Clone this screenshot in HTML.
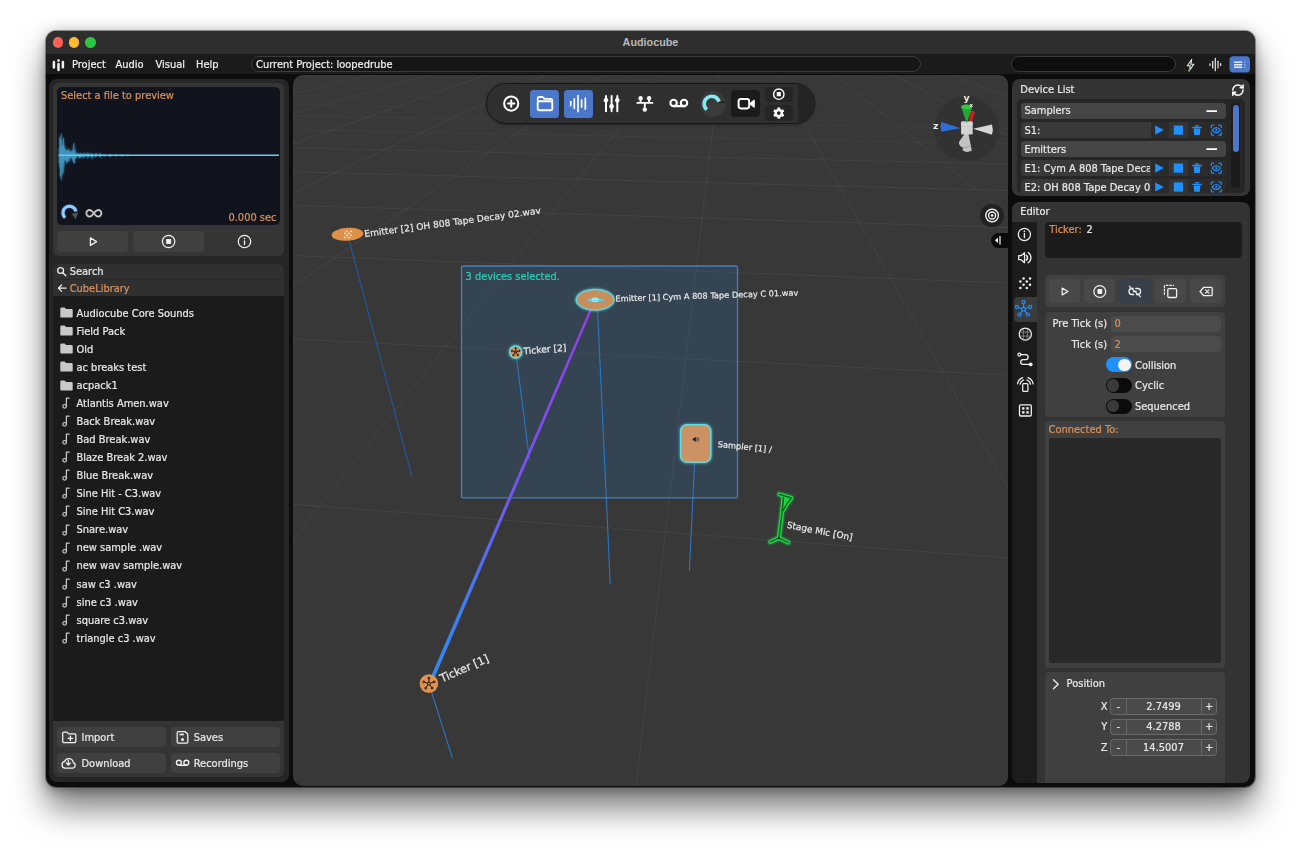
<!DOCTYPE html>
<html lang="en">
<head>
<meta charset="utf-8">
<title>Audiocube</title>
<style>
*{box-sizing:border-box;margin:0;padding:0}
html,body{width:1300px;height:847px;overflow:hidden;background:#fff}
body{-webkit-text-stroke:.22px currentColor;font-family:"DejaVu Sans","Liberation Sans",sans-serif;font-size:9.9px;color:#e8e8e8;position:relative}
.abs{position:absolute}
#win{position:absolute;left:46px;top:31px;width:1209px;height:756px;background:#0c0c0c;border-radius:10px;overflow:hidden;opacity:.999;
  box-shadow:0 0 0 1px rgba(0,0,0,.35)}
#shadow{position:absolute;left:46px;top:31px;width:1209px;height:756px;border-radius:10px;
  box-shadow:0 21px 33px rgba(0,0,0,.52),0 3px 9px rgba(0,0,0,.22),0 0 16px rgba(0,0,0,.16)}
#titlebar{position:absolute;left:0;top:0;width:100%;height:23px;background:#2e2e2e;text-align:center;line-height:23.6px;font-weight:bold;font-family:'Liberation Sans',sans-serif;font-size:10.8px;color:#b9b9b9;-webkit-text-stroke:0}
.tl{position:absolute;top:6.1px;width:10.6px;height:10.6px;border-radius:50%}
#menubar{position:absolute;left:0;top:23px;width:100%;height:19.6px;background:#1b1b1b}
.menu{position:absolute;top:.2px;line-height:21px;color:#f0f0f0}
.panel{position:absolute;background:#262626;border-radius:8px}
.sub{position:absolute;background:#353535;border-radius:6px}
.btn{position:absolute;background:#404040;border-radius:4px}
svg{position:absolute;overflow:visible}
svg text{-webkit-text-stroke:0}
.t{position:absolute;white-space:nowrap;line-height:12px}
.or{color:#d8925c}
#editor .t,#devlist .t{margin-top:.9px}
</style>
</head>
<body>
<div id="shadow"></div>
<div id="win">
  <div id="titlebar">Audiocube
    <div class="tl" style="left:6.5px;background:#fe5f57"></div>
    <div class="tl" style="left:22.5px;background:#febc2e"></div>
    <div class="tl" style="left:39px;background:#28c840"></div>
  </div>
  <div id="menubar">
    <svg style="left:0;top:0" width="1209" height="21" viewBox="0 0 1209 21" fill="none" stroke-linecap="round" stroke-linejoin="round"><path d="M7.9 7.9V13.4" stroke="#f2f2f2" stroke-width="2.500"/><path d="M16.9 7.9V13.2" stroke="#f2f2f2" stroke-width="2.500"/><path d="M12.5 10.0V16.0" stroke="#f2f2f2" stroke-width="2.500"/><circle cx="12.5" cy="6.6" r="1.350" fill="#f2f2f2"/><path d="M1145.7 5.5L1141.3 11.7h3l-1.200 5.200L1147.9 10.2h-3z" stroke="#f2f2f2" stroke-width="1.050"/><path d="M1143.7 14.5l-.600 2.600" stroke="#2fd24a" stroke-width="1.300"/><path d="M1164.0 9.8v1.6" stroke="#dedede" stroke-width="1.300"/><path d="M1166.7 7.3v6.6" stroke="#dedede" stroke-width="1.300"/><path d="M1169.3 4.5v12.2" stroke="#dedede" stroke-width="1.300"/><path d="M1172.0 7.3v6.6" stroke="#dedede" stroke-width="1.300"/><path d="M1174.6 9.7v1.8" stroke="#dedede" stroke-width="1.300"/><rect x="1183.5" y="2.3" width="20.500" height="16.200" rx="3.800" fill="#4a77c9"/><path d="M1188.0 8.2h8.200" stroke="#e4ecff" stroke-width="1.350" stroke-linecap="butt"/><path d="M1198.2 8.2h1" stroke="#b9cdf5" stroke-width="1.200" stroke-linecap="butt"/><path d="M1188.0 10.7h8.200" stroke="#e4ecff" stroke-width="1.350" stroke-linecap="butt"/><path d="M1198.2 10.7h1" stroke="#b9cdf5" stroke-width="1.200" stroke-linecap="butt"/><path d="M1188.0 13.2h8.200" stroke="#e4ecff" stroke-width="1.350" stroke-linecap="butt"/><path d="M1198.2 13.2h1" stroke="#b9cdf5" stroke-width="1.200" stroke-linecap="butt"/></svg><div class="menu" style="left:26px">Project</div>
    <div class="menu" style="left:69.5px">Audio</div>
    <div class="menu" style="left:109.5px">Visual</div>
    <div class="menu" style="left:150px">Help</div>
    <div class="abs" style="left:205px;top:2px;width:670px;height:16px;border-radius:8px;background:#161616;border:1px solid #3c3c3c"></div>
    <div class="menu" style="left:210px">Current Project: loopedrube</div>
    <div class="abs" style="left:965px;top:2px;width:165px;height:16px;border-radius:8px;background:#0d0d0d;border:1px solid #3a3a3a"></div>
  </div>

  <!-- LEFT PANEL -->
  <div class="panel" id="left" style="left:3px;top:48px;width:240px;height:702.5px">
    <div class="sub" style="left:4px;top:4px;width:231px;height:172.6px"></div>
    <div class="abs" id="prev" style="left:8px;top:8.3px;width:223px;height:137.6px;background:#12141d;border-radius:5px;overflow:hidden">
      <div class="t or" style="left:4px;top:3.2px">Select a file to preview</div>
      <div class="t or" style="right:3.5px;top:124.6px">0.000 sec</div>
      <svg style="left:0;top:0" width="223" height="138" viewBox="0 0 223 138"><defs><filter id="wg" x="-5%" y="-30%" width="110%" height="160%"><feGaussianBlur stdDeviation="1"/></filter></defs>
<path d="M2.15 61.0V76.4M2.70 50.8V80.3M3.25 49.2V88.8M3.80 52.9V90.6M4.35 46.4V93.2M4.90 57.8V82.2M5.45 59.1V88.0M6.00 52.3V75.8M6.55 50.7V85.7M7.10 56.0V80.2M7.65 61.9V73.4M8.20 59.5V73.3M8.75 62.9V74.1M9.30 64.5V75.1M9.85 62.3V76.8M10.40 62.4V74.9M10.95 63.0V74.4M11.50 63.6V72.1M12.05 61.7V74.9M12.60 62.8V73.3M13.15 65.1V71.1M13.70 65.5V70.4M14.25 64.0V71.4M14.80 63.7V71.4M15.35 62.4V73.8M15.90 65.3V72.4M16.45 57.6V75.7M17.00 55.9V76.0M17.55 64.0V76.6M18.10 61.8V72.3M18.65 66.3V71.1M19.20 64.9V71.2M19.75 67.1V69.8M20.30 67.2V69.3M20.85 66.1V69.5M21.40 66.5V69.9M21.95 66.9V70.8M22.50 66.5V71.4M23.05 66.3V71.2M23.60 66.5V70.2M24.15 65.9V70.4M24.70 67.2V70.1M25.25 67.4V69.4M25.80 66.4V69.9M26.35 67.1V71.3M26.90 66.4V70.3M27.45 65.5V70.2M28.00 67.1V69.2M28.55 67.7V69.4M29.10 67.6V69.4M29.65 67.3V69.3M30.20 65.9V69.9M30.75 65.7V71.6M31.30 66.7V69.9M31.85 66.2V70.2M32.40 67.6V68.9M32.95 67.4V69.4M33.50 67.7V69.5M34.05 66.4V69.8M34.60 66.1V69.7M35.15 66.8V72.1M35.70 67.0V70.4M36.25 67.6V69.5M36.80 67.6V68.8M37.35 67.9V69.0M37.90 67.8V68.9M38.45 66.7V70.4M39.00 66.1V69.9M39.55 66.2V69.4M40.10 67.9V68.9M41.75 67.7V68.7M42.30 67.4V69.5M42.85 66.1V69.7M43.40 66.7V70.8M43.95 66.9V69.4M46.15 67.4V69.1M46.70 67.5V69.0M47.25 67.6V70.1M47.80 67.4V69.4M52.20 67.9V69.2M52.75 67.0V69.9M53.30 67.2V70.2M53.85 67.9V69.0M58.80 67.2V69.6M59.35 67.3V69.3M64.85 67.2V69.5M65.40 67.6V69.2M70.90 67.3V69.3" stroke="#2f8fd0" stroke-width="1.2" opacity=".5" filter="url(#wg)" fill="none"/>
<path d="M1.5 68.3H222" stroke="#2f8fd0" stroke-width="3" opacity=".35" filter="url(#wg)"/>
<path d="M2.15 61.0V76.4M2.70 50.8V80.3M3.25 49.2V88.8M3.80 52.9V90.6M4.35 46.4V93.2M4.90 57.8V82.2M5.45 59.1V88.0M6.00 52.3V75.8M6.55 50.7V85.7M7.10 56.0V80.2M7.65 61.9V73.4M8.20 59.5V73.3M8.75 62.9V74.1M9.30 64.5V75.1M9.85 62.3V76.8M10.40 62.4V74.9M10.95 63.0V74.4M11.50 63.6V72.1M12.05 61.7V74.9M12.60 62.8V73.3M13.15 65.1V71.1M13.70 65.5V70.4M14.25 64.0V71.4M14.80 63.7V71.4M15.35 62.4V73.8M15.90 65.3V72.4M16.45 57.6V75.7M17.00 55.9V76.0M17.55 64.0V76.6M18.10 61.8V72.3M18.65 66.3V71.1M19.20 64.9V71.2M19.75 67.1V69.8M20.30 67.2V69.3M20.85 66.1V69.5M21.40 66.5V69.9M21.95 66.9V70.8M22.50 66.5V71.4M23.05 66.3V71.2M23.60 66.5V70.2M24.15 65.9V70.4M24.70 67.2V70.1M25.25 67.4V69.4M25.80 66.4V69.9M26.35 67.1V71.3M26.90 66.4V70.3M27.45 65.5V70.2M28.00 67.1V69.2M28.55 67.7V69.4M29.10 67.6V69.4M29.65 67.3V69.3M30.20 65.9V69.9M30.75 65.7V71.6M31.30 66.7V69.9M31.85 66.2V70.2M32.40 67.6V68.9M32.95 67.4V69.4M33.50 67.7V69.5M34.05 66.4V69.8M34.60 66.1V69.7M35.15 66.8V72.1M35.70 67.0V70.4M36.25 67.6V69.5M36.80 67.6V68.8M37.35 67.9V69.0M37.90 67.8V68.9M38.45 66.7V70.4M39.00 66.1V69.9M39.55 66.2V69.4M40.10 67.9V68.9M41.75 67.7V68.7M42.30 67.4V69.5M42.85 66.1V69.7M43.40 66.7V70.8M43.95 66.9V69.4M46.15 67.4V69.1M46.70 67.5V69.0M47.25 67.6V70.1M47.80 67.4V69.4M52.20 67.9V69.2M52.75 67.0V69.9M53.30 67.2V70.2M53.85 67.9V69.0M58.80 67.2V69.6M59.35 67.3V69.3M64.85 67.2V69.5M65.40 67.6V69.2M70.90 67.3V69.3" stroke="#5fcdf6" stroke-width=".42" opacity=".9" fill="none"/>
<path d="M1.5 68.3H222" stroke="#5fcdf6" stroke-width="1.5"/></svg>
      <svg style="left:2px;top:115px" width="50" height="22" viewBox="0 0 50 22">
<path d="M6.2 15.6A6.5 6.5 0 1 1 16.9 9.6" fill="none" stroke="#3a7fd0" stroke-width="4.6" opacity=".35"/>
<path d="M6.2 15.6A6.5 6.5 0 1 1 16.9 9.6" fill="none" stroke="#93caff" stroke-width="3"/>
<path d="M12.7 11.4L19.2 10.8L16.6 17.2Z" fill="#565656"/>
<path d="M34.85 11.3C33.4 9.2 32.3 8 30.6 8a3.3 3.3 0 0 0 0 6.6c1.7 0 2.8-1.2 4.25-3.3 1.45-2.100 2.550-3.300 4.250-3.300a3.300 3.300 0 0 1 0 6.600c-1.700 0-2.800-1.200-4.250-3.300z" fill="none" stroke="#c6c6c6" stroke-width="1.8"/></svg>
    </div>
    <div class="btn" style="left:8px;top:151.7px;width:71.4px;height:21.2px"></div>
    <div class="btn" style="left:84px;top:151.7px;width:71.4px;height:21.2px"></div>
    <svg style="left:0;top:151.7px" width="240" height="22" viewBox="0 151.7 240 22">
<path d="M41.4 158.6L47.6 162.3L41.4 166.1Z" fill="none" stroke="#f2f2f2" stroke-width="1.25" stroke-linejoin="round"/>
<circle cx="119.6" cy="162.2" r="6.2" fill="none" stroke="#f2f2f2" stroke-width="1.25"/><rect x="117.1" y="159.7" width="5" height="5" rx=".8" fill="#f2f2f2"/>
<circle cx="195.5" cy="162.2" r="6.2" fill="none" stroke="#f2f2f2" stroke-width="1.25"/><path d="M195.5 161.6v3.6" stroke="#f2f2f2" stroke-width="1.3" stroke-linecap="round"/><circle cx="195.5" cy="159.3" r=".8" fill="#f2f2f2"/>
</svg>
    <div class="abs" style="left:4px;top:185px;width:231px;height:31.7px;background:#303030;border-radius:6px 6px 0 0"></div>
    <div class="abs" style="left:4px;top:200.2px;width:231px;height:1px;background:#292929"></div>
    <div class="t" style="left:20.7px;top:186.6px">Search</div>
    <div class="t or" style="left:20.7px;top:204px">CubeLibrary</div>
    <svg style="left:0;top:185px" width="30" height="32" viewBox="0 185 30 32">
<circle cx="11.6" cy="191.5" r="2.9" fill="none" stroke="#f0f0f0" stroke-width="1.3"/><path d="M13.8 193.8l3 3" stroke="#f0f0f0" stroke-width="1.4" stroke-linecap="round"/>
<path d="M17 209.2H9.6M12.6 206l-3.2 3.2 3.2 3.2" fill="none" stroke="#f0f0f0" stroke-width="1.2" stroke-linecap="round" stroke-linejoin="round"/>
</svg>
    <div class="abs" style="left:4px;top:216.6px;width:231px;height:425.1px;background:#1b1b1b"></div>
    <svg style="left:11px;top:228.30px" width="13" height="11" viewBox="0 0 13 11"><path d="M0.3 1.6a1.2 1.2 0 0 1 1.2-1.2h3.1l1.5 1.7h5.4a1.2 1.2 0 0 1 1.2 1.2v6.1a1.2 1.2 0 0 1-1.2 1.2h-10a1.2 1.2 0 0 1-1.2-1.2z" fill="#c9c9c9"/></svg>
<div class="t" style="left:27.5px;top:228.60px">Audiocube Core Sounds</div>
<svg style="left:11px;top:246.36px" width="13" height="11" viewBox="0 0 13 11"><path d="M0.3 1.6a1.2 1.2 0 0 1 1.2-1.2h3.1l1.5 1.7h5.4a1.2 1.2 0 0 1 1.2 1.2v6.1a1.2 1.2 0 0 1-1.2 1.2h-10a1.2 1.2 0 0 1-1.2-1.2z" fill="#c9c9c9"/></svg>
<div class="t" style="left:27.5px;top:246.66px">Field Pack</div>
<svg style="left:11px;top:264.42px" width="13" height="11" viewBox="0 0 13 11"><path d="M0.3 1.6a1.2 1.2 0 0 1 1.2-1.2h3.1l1.5 1.7h5.4a1.2 1.2 0 0 1 1.2 1.2v6.1a1.2 1.2 0 0 1-1.2 1.2h-10a1.2 1.2 0 0 1-1.2-1.2z" fill="#c9c9c9"/></svg>
<div class="t" style="left:27.5px;top:264.72px">Old</div>
<svg style="left:11px;top:282.48px" width="13" height="11" viewBox="0 0 13 11"><path d="M0.3 1.6a1.2 1.2 0 0 1 1.2-1.2h3.1l1.5 1.7h5.4a1.2 1.2 0 0 1 1.2 1.2v6.1a1.2 1.2 0 0 1-1.2 1.2h-10a1.2 1.2 0 0 1-1.2-1.2z" fill="#c9c9c9"/></svg>
<div class="t" style="left:27.5px;top:282.78px">ac breaks test</div>
<svg style="left:11px;top:300.54px" width="13" height="11" viewBox="0 0 13 11"><path d="M0.3 1.6a1.2 1.2 0 0 1 1.2-1.2h3.1l1.5 1.7h5.4a1.2 1.2 0 0 1 1.2 1.2v6.1a1.2 1.2 0 0 1-1.2 1.2h-10a1.2 1.2 0 0 1-1.2-1.2z" fill="#c9c9c9"/></svg>
<div class="t" style="left:27.5px;top:300.84px">acpack1</div>
<svg style="left:12.5px;top:318.10px" width="8" height="12" viewBox="0 0 8 12"><path d="M4.4 9.2V1.2h2.8" fill="none" stroke="#c9c9c9" stroke-width="1.2" stroke-linecap="round" stroke-linejoin="round"/><circle cx="2.6" cy="9.3" r="1.8" fill="none" stroke="#c9c9c9" stroke-width="1.2"/></svg>
<div class="t" style="left:27.5px;top:318.90px">Atlantis Amen.wav</div>
<svg style="left:12.5px;top:336.16px" width="8" height="12" viewBox="0 0 8 12"><path d="M4.4 9.2V1.2h2.8" fill="none" stroke="#c9c9c9" stroke-width="1.2" stroke-linecap="round" stroke-linejoin="round"/><circle cx="2.6" cy="9.3" r="1.8" fill="none" stroke="#c9c9c9" stroke-width="1.2"/></svg>
<div class="t" style="left:27.5px;top:336.96px">Back Break.wav</div>
<svg style="left:12.5px;top:354.22px" width="8" height="12" viewBox="0 0 8 12"><path d="M4.4 9.2V1.2h2.8" fill="none" stroke="#c9c9c9" stroke-width="1.2" stroke-linecap="round" stroke-linejoin="round"/><circle cx="2.6" cy="9.3" r="1.8" fill="none" stroke="#c9c9c9" stroke-width="1.2"/></svg>
<div class="t" style="left:27.5px;top:355.02px">Bad Break.wav</div>
<svg style="left:12.5px;top:372.28px" width="8" height="12" viewBox="0 0 8 12"><path d="M4.4 9.2V1.2h2.8" fill="none" stroke="#c9c9c9" stroke-width="1.2" stroke-linecap="round" stroke-linejoin="round"/><circle cx="2.6" cy="9.3" r="1.8" fill="none" stroke="#c9c9c9" stroke-width="1.2"/></svg>
<div class="t" style="left:27.5px;top:373.08px">Blaze Break 2.wav</div>
<svg style="left:12.5px;top:390.34px" width="8" height="12" viewBox="0 0 8 12"><path d="M4.4 9.2V1.2h2.8" fill="none" stroke="#c9c9c9" stroke-width="1.2" stroke-linecap="round" stroke-linejoin="round"/><circle cx="2.6" cy="9.3" r="1.8" fill="none" stroke="#c9c9c9" stroke-width="1.2"/></svg>
<div class="t" style="left:27.5px;top:391.14px">Blue Break.wav</div>
<svg style="left:12.5px;top:408.40px" width="8" height="12" viewBox="0 0 8 12"><path d="M4.4 9.2V1.2h2.8" fill="none" stroke="#c9c9c9" stroke-width="1.2" stroke-linecap="round" stroke-linejoin="round"/><circle cx="2.6" cy="9.3" r="1.8" fill="none" stroke="#c9c9c9" stroke-width="1.2"/></svg>
<div class="t" style="left:27.5px;top:409.20px">Sine Hit - C3.wav</div>
<svg style="left:12.5px;top:426.46px" width="8" height="12" viewBox="0 0 8 12"><path d="M4.4 9.2V1.2h2.8" fill="none" stroke="#c9c9c9" stroke-width="1.2" stroke-linecap="round" stroke-linejoin="round"/><circle cx="2.6" cy="9.3" r="1.8" fill="none" stroke="#c9c9c9" stroke-width="1.2"/></svg>
<div class="t" style="left:27.5px;top:427.26px">Sine Hit C3.wav</div>
<svg style="left:12.5px;top:444.52px" width="8" height="12" viewBox="0 0 8 12"><path d="M4.4 9.2V1.2h2.8" fill="none" stroke="#c9c9c9" stroke-width="1.2" stroke-linecap="round" stroke-linejoin="round"/><circle cx="2.6" cy="9.3" r="1.8" fill="none" stroke="#c9c9c9" stroke-width="1.2"/></svg>
<div class="t" style="left:27.5px;top:445.32px">Snare.wav</div>
<svg style="left:12.5px;top:462.58px" width="8" height="12" viewBox="0 0 8 12"><path d="M4.4 9.2V1.2h2.8" fill="none" stroke="#c9c9c9" stroke-width="1.2" stroke-linecap="round" stroke-linejoin="round"/><circle cx="2.6" cy="9.3" r="1.8" fill="none" stroke="#c9c9c9" stroke-width="1.2"/></svg>
<div class="t" style="left:27.5px;top:463.38px">new sample .wav</div>
<svg style="left:12.5px;top:480.64px" width="8" height="12" viewBox="0 0 8 12"><path d="M4.4 9.2V1.2h2.8" fill="none" stroke="#c9c9c9" stroke-width="1.2" stroke-linecap="round" stroke-linejoin="round"/><circle cx="2.6" cy="9.3" r="1.8" fill="none" stroke="#c9c9c9" stroke-width="1.2"/></svg>
<div class="t" style="left:27.5px;top:481.44px">new wav sample.wav</div>
<svg style="left:12.5px;top:498.70px" width="8" height="12" viewBox="0 0 8 12"><path d="M4.4 9.2V1.2h2.8" fill="none" stroke="#c9c9c9" stroke-width="1.2" stroke-linecap="round" stroke-linejoin="round"/><circle cx="2.6" cy="9.3" r="1.8" fill="none" stroke="#c9c9c9" stroke-width="1.2"/></svg>
<div class="t" style="left:27.5px;top:499.50px">saw c3 .wav</div>
<svg style="left:12.5px;top:516.76px" width="8" height="12" viewBox="0 0 8 12"><path d="M4.4 9.2V1.2h2.8" fill="none" stroke="#c9c9c9" stroke-width="1.2" stroke-linecap="round" stroke-linejoin="round"/><circle cx="2.6" cy="9.3" r="1.8" fill="none" stroke="#c9c9c9" stroke-width="1.2"/></svg>
<div class="t" style="left:27.5px;top:517.56px">sine c3 .wav</div>
<svg style="left:12.5px;top:534.82px" width="8" height="12" viewBox="0 0 8 12"><path d="M4.4 9.2V1.2h2.8" fill="none" stroke="#c9c9c9" stroke-width="1.2" stroke-linecap="round" stroke-linejoin="round"/><circle cx="2.6" cy="9.3" r="1.8" fill="none" stroke="#c9c9c9" stroke-width="1.2"/></svg>
<div class="t" style="left:27.5px;top:535.62px">square c3.wav</div>
<svg style="left:12.5px;top:552.88px" width="8" height="12" viewBox="0 0 8 12"><path d="M4.4 9.2V1.2h2.8" fill="none" stroke="#c9c9c9" stroke-width="1.2" stroke-linecap="round" stroke-linejoin="round"/><circle cx="2.6" cy="9.3" r="1.8" fill="none" stroke="#c9c9c9" stroke-width="1.2"/></svg>
<div class="t" style="left:27.5px;top:553.68px">triangle c3 .wav</div>
    <div class="abs" style="left:4px;top:641.7px;width:231px;height:56.8px;background:#343434;border-radius:0 0 6px 6px"></div>
    <div class="btn" style="left:7.75px;top:648px;width:109.5px;height:20.3px"></div>
    <div class="btn" style="left:121.5px;top:648px;width:109.5px;height:20.3px"></div>
    <div class="btn" style="left:7.75px;top:674px;width:109.5px;height:20.3px"></div>
    <div class="btn" style="left:121.5px;top:674px;width:109.5px;height:20.3px"></div>
    <div class="t" style="left:32.5px;top:652.7px">Import</div>
    <div class="t" style="left:144.7px;top:652.7px">Saves</div>
    <div class="t" style="left:32.5px;top:678.7px">Download</div>
    <div class="t" style="left:144.7px;top:678.7px">Recordings</div>
    <svg style="left:0;top:640px" width="240" height="62" viewBox="0 640 240 62" fill="none" stroke="#f2f2f2" stroke-width="1.250" stroke-linecap="round" stroke-linejoin="round"><path d="M13.7 654.2a1.100 1.100 0 0 1 1.100-1.100h3.200l1.500 1.700h6.200a1.100 1.100 0 0 1 1.100 1.100v6.600a1.100 1.100 0 0 1-1.100 1.100h-10.900a1.100 1.100 0 0 1-1.100-1.100z"/><path d="M19.2 659.4h4.400M21.4 657.2v4.400" stroke-width="1.400"/><path d="M128.2 653.8a1.100 1.100 0 0 1 1.100-1.100h7l2.500 2.500v7.800a1.100 1.100 0 0 1-1.100 1.100h-8.400a1.100 1.100 0 0 1-1.100-1.100z"/><path d="M130.6 655.5h4.200" stroke-width="1.700" stroke-linecap="butt"/><circle cx="133.5" cy="660.4" r="1.500" fill="#f2f2f2" stroke="none"/><path d="M15.9 689.2h7.400a2.900 2.900 0 0 0 .900-5.650a4.400 4.400 0 0 0-8.500-1.100a3.450 3.450 0 0 0 .200 6.750z"/><path d="M19.3 681.0v4.800M17.3 684.0l2 2 2-2" stroke-width="1.200"/><circle cx="129.9" cy="683.7" r="2.450" stroke-width="1.350"/><circle cx="137.3" cy="683.7" r="2.450" stroke-width="1.350"/><path d="M129.9 686.2H137.3" stroke-width="1.350"/></svg>
  </div>
  <!-- VIEWPORT -->
  <div class="abs" id="vp" style="left:247px;top:44px;width:715px;height:711px;background:#383838;border-radius:10px 9px 9px 10px;overflow:hidden"><!--VPSTART--><svg style="left:0;top:0" width="715" height="711" viewBox="0 0 715 711">
<defs><linearGradient id="pl" gradientUnits="userSpaceOnUse" x1="298" y1="232" x2="138" y2="604"><stop offset="0" stop-color="#a03cf2"/><stop offset=".45" stop-color="#7a52f0"/><stop offset=".8" stop-color="#3f7df2"/><stop offset="1" stop-color="#3388f5"/></linearGradient><filter id="gl" x="-40%" y="-40%" width="180%" height="180%"><feGaussianBlur stdDeviation="1.3"/></filter><filter id="gl2" x="-40%" y="-40%" width="180%" height="180%"><feGaussianBlur stdDeviation=".8"/></filter></defs>
<path d="M-284.7 -5.0L-6779.7 725.0" stroke="#fff" stroke-opacity="0.012" stroke-width="1" fill="none"/>
<path d="M-230.0 -5.0L-6232.0 725.0" stroke="#fff" stroke-opacity="0.012" stroke-width="1" fill="none"/>
<path d="M-175.3 -5.0L-5684.2 725.0" stroke="#fff" stroke-opacity="0.012" stroke-width="1" fill="none"/>
<path d="M-120.6 -5.0L-5136.4 725.0" stroke="#fff" stroke-opacity="0.012" stroke-width="1" fill="none"/>
<path d="M-65.8 -5.0L-4588.6 725.0" stroke="#fff" stroke-opacity="0.015" stroke-width="1" fill="none"/>
<path d="M-11.1 -5.0L-4040.9 725.0" stroke="#fff" stroke-opacity="0.023" stroke-width="1" fill="none"/>
<path d="M43.6 -5.0L-3493.1 725.0" stroke="#fff" stroke-opacity="0.031" stroke-width="1" fill="none"/>
<path d="M98.3 -5.0L-2945.3 725.0" stroke="#fff" stroke-opacity="0.039" stroke-width="1" fill="none"/>
<path d="M153.0 -5.0L-2397.6 725.0" stroke="#fff" stroke-opacity="0.047" stroke-width="1" fill="none"/>
<path d="M207.7 -5.0L-1849.8 725.0" stroke="#fff" stroke-opacity="0.055" stroke-width="1" fill="none"/>
<path d="M262.4 -5.0L-1302.0 725.0" stroke="#fff" stroke-opacity="0.055" stroke-width="1" fill="none"/>
<path d="M317.1 -5.0L-754.3 725.0" stroke="#fff" stroke-opacity="0.055" stroke-width="1" fill="none"/>
<path d="M371.8 -5.0L-206.5 725.0" stroke="#fff" stroke-opacity="0.055" stroke-width="1" fill="none"/>
<path d="M426.5 -5.0L341.3 725.0" stroke="#fff" stroke-opacity="0.055" stroke-width="1" fill="none"/>
<path d="M481.2 -5.0L889.1 725.0" stroke="#fff" stroke-opacity="0.055" stroke-width="1" fill="none"/>
<path d="M536.0 -5.0L1436.8 725.0" stroke="#fff" stroke-opacity="0.055" stroke-width="1" fill="none"/>
<path d="M590.7 -5.0L1984.6 725.0" stroke="#fff" stroke-opacity="0.055" stroke-width="1" fill="none"/>
<path d="M645.4 -5.0L2532.4 725.0" stroke="#fff" stroke-opacity="0.047" stroke-width="1" fill="none"/>
<path d="M700.1 -5.0L3080.1 725.0" stroke="#fff" stroke-opacity="0.039" stroke-width="1" fill="none"/>
<path d="M754.8 -5.0L3627.9 725.0" stroke="#fff" stroke-opacity="0.031" stroke-width="1" fill="none"/>
<path d="M809.5 -5.0L4175.7 725.0" stroke="#fff" stroke-opacity="0.023" stroke-width="1" fill="none"/>
<path d="M-13.0 428.3L717.0 483.1" stroke="#fff" stroke-opacity="0.055" stroke-width="1" fill="none"/>
<path d="M-13.0 263.3L717.0 300.2" stroke="#fff" stroke-opacity="0.055" stroke-width="1" fill="none"/>
<path d="M-13.0 180.1L717.0 208.1" stroke="#fff" stroke-opacity="0.055" stroke-width="1" fill="none"/>
<path d="M-13.0 130.0L717.0 152.6" stroke="#fff" stroke-opacity="0.055" stroke-width="1" fill="none"/>
<path d="M-13.0 96.5L717.0 115.5" stroke="#fff" stroke-opacity="0.055" stroke-width="1" fill="none"/>
<path d="M-13.0 72.5L717.0 89.0" stroke="#fff" stroke-opacity="0.048" stroke-width="1" fill="none"/>
<path d="M-13.0 54.5L717.0 69.0" stroke="#fff" stroke-opacity="0.041" stroke-width="1" fill="none"/>
<path d="M-13.0 40.5L717.0 53.5" stroke="#fff" stroke-opacity="0.034" stroke-width="1" fill="none"/>
<path d="M-13.0 29.3L717.0 41.1" stroke="#fff" stroke-opacity="0.027" stroke-width="1" fill="none"/>
<path d="M-13.0 20.1L717.0 30.9" stroke="#fff" stroke-opacity="0.020" stroke-width="1" fill="none"/>
<path d="M-13.0 12.5L717.0 22.4" stroke="#fff" stroke-opacity="0.013" stroke-width="1" fill="none"/>
<path d="M-13.0 6.0L717.0 15.2" stroke="#fff" stroke-opacity="0.012" stroke-width="1" fill="none"/>
<path d="M-13.0 0.4L717.0 9.1" stroke="#fff" stroke-opacity="0.012" stroke-width="1" fill="none"/>
<path d="M-13.0 -4.4L717.0 3.7" stroke="#fff" stroke-opacity="0.012" stroke-width="1" fill="none"/>
<path d="M-13.0 -8.6L717.0 -0.9" stroke="#fff" stroke-opacity="0.012" stroke-width="1" fill="none"/>
<path d="M-13.0 -12.3L717.0 -5.1" stroke="#fff" stroke-opacity="0.012" stroke-width="1" fill="none"/>
<path d="M-13.0 -15.6L717.0 -8.7" stroke="#fff" stroke-opacity="0.012" stroke-width="1" fill="none"/>
<path d="M-13.0 -18.6L717.0 -12.0" stroke="#fff" stroke-opacity="0.012" stroke-width="1" fill="none"/>
<path d="M-13.0 -21.3L717.0 -15.0" stroke="#fff" stroke-opacity="0.012" stroke-width="1" fill="none"/>
<path d="M56.0 165.0L118.9 401.5" stroke="#205a9c" stroke-width="1.1" fill="none" />
<path d="M223.5 283.0L236.5 385.0" stroke="#2a78c4" stroke-width="1.1" fill="none" />
<path d="M304.5 234.0L317.3 509.2" stroke="#2a78c4" stroke-width="1.1" fill="none" />
<path d="M401.6 387.0L396.4 495.7" stroke="#2a78c4" stroke-width="1.1" fill="none" />
<path d="M138.6 617.0L159.5 683.3" stroke="#2a78c4" stroke-width="1.1" fill="none" />
<rect x="168.5" y="191.0" width="276.0" height="231.8" rx="1.5" fill="#1e82d7" fill-opacity=".16" stroke="#3f80bd" stroke-width="1.3"/>
<polygon points="297.5,232.6 299.5,233.4 140.2,605.8 136.8,604.2" fill="url(#pl)"/>
<ellipse cx="54.5" cy="159.3" rx="15.9" ry="6.5" fill="#de9049" transform="rotate(-3.5 54.5 159.3)"/>
<g fill="#fff4e2"><circle cx="53.7" cy="156.3" r=".85"/><circle cx="58.0" cy="156.3" r=".85"/><circle cx="51.8" cy="158.3" r=".85"/><circle cx="55.8" cy="158.3" r=".85"/><circle cx="53.7" cy="160.4" r=".85"/><circle cx="58.0" cy="160.4" r=".85"/><circle cx="51.8" cy="162.5" r=".85"/><circle cx="55.8" cy="162.5" r=".85"/></g>
<ellipse cx="302.1" cy="224.7" rx="20.2" ry="11.7" fill="#58d6de" opacity=".6" filter="url(#gl2)"/>
<ellipse cx="302.1" cy="224.7" rx="19.5" ry="11" fill="#62d2da"/>
<ellipse cx="302.1" cy="224.7" rx="18" ry="9.500" fill="#c98e5c"/>
<path d="M292.5 224.9L302.1 222.3L313.1 224.9L302.1 227.5Z" fill="#4fd3e6"/>
<g fill="#fff"><circle cx="300.1" cy="223.3" r=".6"/><circle cx="302.1" cy="222.9" r=".6"/><circle cx="304.1" cy="223.3" r=".6"/><circle cx="299.1" cy="224.7" r=".6"/><circle cx="301.1" cy="224.7" r=".6"/><circle cx="303.1" cy="224.7" r=".6"/><circle cx="305.1" cy="224.7" r=".6"/><circle cx="300.1" cy="226.1" r=".6"/><circle cx="302.1" cy="226.5" r=".6"/><circle cx="304.1" cy="226.1" r=".6"/></g>
<circle cx="222.7" cy="277.0" r="7.4" fill="#58d6de" opacity=".6" filter="url(#gl2)"/>
<circle cx="222.7" cy="277.0" r="6.700" fill="#66dde2"/><circle cx="222.7" cy="277.0" r="5.300" fill="#d3905a"/>
<g stroke="#141414" stroke-width="0.9" fill="none"><circle cx="222.7" cy="277.0" r="1.10"/><path d="M222.7 275.9L222.7 273.7"/><circle cx="222.7" cy="273.0" r="0.69"/><path d="M223.7 276.7L225.8 276.0"/><circle cx="226.5" cy="275.8" r="0.69"/><path d="M223.3 277.9L224.6 279.7"/><circle cx="225.0" cy="280.2" r="0.69"/><path d="M222.1 277.9L220.8 279.7"/><circle cx="220.4" cy="280.2" r="0.69"/><path d="M221.7 276.7L219.6 276.0"/><circle cx="218.9" cy="275.8" r="0.69"/></g>
<rect x="386.1" y="348.3" width="33.2" height="40.4" rx="7.500" fill="#58d6de" opacity=".55" filter="url(#gl)"/>
<rect x="386.9" y="349.1" width="31.6" height="38.8" rx="7" fill="#62d9df"/>
<rect x="388.4" y="350.6" width="28.6" height="35.8" rx="5.800" fill="#cc9263"/>
<g stroke="#222" stroke-width=".7" fill="none"><path d="M400.1 363.5h1.200l1.500-1.300v4.400l-1.500-1.300h-1.200z" fill="#222"/><path d="M403.7 363.2a1.600 1.600 0 0 1 0 2.400M404.7 362.1a3 3 0 0 1 0 4.600"/></g>
<path d="M486.2 419.3L498.3 422.9M490.5 422.5L488.2 445.0L485.9 463.0M498.3 423.4Q494.0 428.0 490.0 435.5M477.3 467.0L485.9 463.0L495.2 467.5" stroke="#19e34a" stroke-width="5.4" fill="none" stroke-linecap="round" stroke-linejoin="round" opacity=".45" filter="url(#gl2)"/>
<path d="M486.2 419.3L498.3 422.9M490.5 422.5L488.2 445.0L485.9 463.0M498.3 423.4Q494.0 428.0 490.0 435.5M477.3 467.0L485.9 463.0L495.2 467.5" stroke="#22dc48" stroke-width="4" fill="none" stroke-linecap="round" stroke-linejoin="round"/>
<path d="M491.5 423.3L498.0 423.8L491.0 433.5Z" fill="#1fcf42"/>
<path d="M486.2 419.3L498.3 422.9M490.5 422.5L488.2 445.0L485.9 463.0M498.3 423.4Q494.0 428.0 490.0 435.5M477.3 467.0L485.9 463.0L495.2 467.5" stroke="#0f9a2e" stroke-width="1.900" fill="none" stroke-linecap="round" stroke-linejoin="round"/>
<path d="M486.2 419.3L498.3 422.9M490.5 422.5L488.2 445.0L485.9 463.0M498.3 423.4Q494.0 428.0 490.0 435.5M477.3 467.0L485.9 463.0L495.2 467.5" stroke="#04240a" stroke-width=".6" fill="none" stroke-linecap="round" stroke-linejoin="round" opacity=".9"/>
<circle cx="485.9" cy="463.0" r=".9" fill="#020"/>
<circle cx="135.9" cy="608.6" r="9.300" fill="#e0924e"/>
<g stroke="#141414" stroke-width="0.95" fill="none"><circle cx="135.9" cy="608.6" r="1.54"/><path d="M135.9 607.1L135.9 604.0"/><circle cx="135.9" cy="603.1" r="0.96"/><path d="M137.4 608.1L140.3 607.2"/><circle cx="141.1" cy="606.9" r="0.96"/><path d="M136.8 609.8L138.6 612.3"/><circle cx="139.1" cy="613.1" r="0.96"/><path d="M135.0 609.8L133.2 612.3"/><circle cx="132.7" cy="613.1" r="0.96"/><path d="M134.4 608.1L131.5 607.2"/><circle cx="130.7" cy="606.9" r="0.96"/></g>
<text x="71.4" y="159.1" transform="rotate(-7.6 71.4 159.1)" font-size="9.12" fill="#ececec" stroke="#ececec" stroke-width=".2" dominant-baseline="central" >Emitter [2] OH 808 Tape Decay 02.wav</text>
<text x="172.6" y="201.3" transform="rotate(0 172.6 201.3)" font-size="9.8" fill="#22d3bd" stroke="#22d3bd" stroke-width=".2" dominant-baseline="central" >3 devices selected.</text>
<text x="322.4" y="223.6" transform="rotate(-1.9 322.4 223.6)" font-size="8.22" fill="#ececec" stroke="#ececec" stroke-width=".2" dominant-baseline="central" >Emitter [1] Cym A 808 Tape Decay C 01.wav</text>
<text x="230.4" y="276.0" transform="rotate(-5.2 230.4 276.0)" font-size="9.17" fill="#ececec" stroke="#ececec" stroke-width=".2" dominant-baseline="central" >Ticker [2]</text>
<text x="424.8" y="369.0" transform="rotate(5.8 424.8 369.0)" font-size="8.29" fill="#ececec" stroke="#ececec" stroke-width=".2" dominant-baseline="central" >Sampler [1] /</text>
<text x="494.1" y="449.8" transform="rotate(11 494.1 449.8)" font-size="8.99" fill="#ececec" stroke="#ececec" stroke-width=".2" dominant-baseline="central" >Stage Mic [On]</text>
<text x="147.5" y="604.3" transform="rotate(-23.9 147.5 604.3)" font-size="11.1" fill="#ececec" stroke="#ececec" stroke-width=".2" dominant-baseline="central" >Ticker [1]</text>
</svg><!--VPEND--><!--UISTART--><div class="abs" style="left:193.2px;top:8.2px;width:328.5px;height:40.6px;border-radius:20.3px;background:#2f2f2f;border:1.8px solid #161616;box-shadow:0 1px 3px rgba(0,0,0,.35)"></div><div class="abs" style="left:504.5px;top:10.0px;width:15.5px;height:37px;border-radius:0 18.5px 18.5px 0;background:#242424"></div><div class="abs" style="left:237.1px;top:14.8px;width:29.2px;height:27.8px;background:#4a77c9;border-radius:3.5px"></div><div class="abs" style="left:270.5px;top:14.8px;width:29.1px;height:27.8px;background:#4a77c9;border-radius:3.5px"></div><div class="abs" style="left:438.1px;top:14.8px;width:28.7px;height:27.6px;background:#1b1b1b;border-radius:4px"></div><div class="abs" style="left:471.8px;top:11.6px;width:28.4px;height:15.0px;background:#252525;border-radius:4px"></div><div class="abs" style="left:471.8px;top:29.9px;width:28.4px;height:15.7px;background:#252525;border-radius:4px"></div><div class="abs" style="left:406.8px;top:15.6px;width:26px;height:26px;border-radius:50%;background:#3b3b3b"></div><div class="abs" style="left:641.2px;top:20.6px;width:65px;height:65px;border-radius:50%;background:#323232"></div><div class="abs" style="left:687.3px;top:128.7px;width:23.600px;height:23.600px;border-radius:50%;background:#222"></div><div class="abs" style="left:698.0px;top:157.5px;width:20px;height:15.600px;border-radius:7.800px 0 0 7.800px;background:#0b0b0b"></div><svg style="left:0;top:0" width="715" height="260" viewBox="0 0 715 260" fill="none" stroke="#fff" stroke-linecap="round" stroke-linejoin="round"><circle cx="218.2" cy="28.6" r="7.100" stroke-width="2"/><path d="M215.0 28.6h6.400M218.2 25.4v6.400" stroke-width="2"/><path d="M244.7 25.6v-1.800a1.800 1.800 0 0 1 1.800-1.800h3.200l1.800 1.900h6a1.800 1.800 0 0 1 1.800 1.800" stroke-width="1.800"/><rect x="244.7" y="26.2" width="14.600" height="9" rx="1.800" stroke-width="1.900"/><path d="M277.7 26.6v4.0" stroke-width="1.700"/><path d="M281.3 23.8v9.5" stroke-width="1.700"/><path d="M285.0 20.6v16.0" stroke-width="1.700"/><path d="M288.6 25.1v7.0" stroke-width="1.700"/><path d="M292.3 23.1v11.0" stroke-width="1.700"/><path d="M313.0 20.9v15.400" stroke-width="2"/><circle cx="313.0" cy="25.3" r="2.300" fill="#fff" stroke="none"/><path d="M318.6 20.9v15.400" stroke-width="2"/><circle cx="318.6" cy="31.4" r="2.300" fill="#fff" stroke="none"/><path d="M324.3 20.9v15.400" stroke-width="2"/><circle cx="324.3" cy="25.3" r="2.300" fill="#fff" stroke="none"/><path d="M344.3 27.9h15.1M347.6 23.3V27.9M356.1 23.3V27.9M351.8 27.9V34.6" stroke-width="1.900"/><circle cx="347.6" cy="23.3" r="2.200" fill="#fff" stroke="none"/><circle cx="356.1" cy="23.3" r="2.200" fill="#fff" stroke="none"/><circle cx="351.8" cy="34.6" r="2.200" fill="#fff" stroke="none"/><circle cx="380.6" cy="27.9" r="3.200" stroke-width="2.100"/><circle cx="391.0" cy="27.9" r="3.200" stroke-width="2.100"/><path d="M380.6 31.1H391.0" stroke-width="2.100"/><path d="M413.9 34.7A7.600 7.600 0 1 1 426.1 26.9" stroke="#86e9ef" stroke-width="3.600" stroke-linecap="butt"/><path d="M426.3 27.3l5.300-.3" stroke="#0a0a0a" stroke-width="1.100"/><rect x="445.6" y="24.0" width="10.600" height="9.400" rx="2.300" stroke-width="2"/><path d="M457.2 28.7l3.900-3.300v6.600z" fill="#fff" stroke-width="1.400"/><circle cx="485.8" cy="19.2" r="5.200" stroke-width="1.400"/><rect x="483.7" y="17.1" width="4.200" height="4.200" rx=".5" fill="#fff" stroke="none"/><path d="M488.57 39.70L490.65 40.90" stroke-width="2.700" stroke-linecap="butt"/><path d="M485.80 41.30L485.80 43.70" stroke-width="2.700" stroke-linecap="butt"/><path d="M483.03 39.70L480.95 40.90" stroke-width="2.700" stroke-linecap="butt"/><path d="M483.03 36.50L480.95 35.30" stroke-width="2.700" stroke-linecap="butt"/><path d="M485.80 34.90L485.80 32.50" stroke-width="2.700" stroke-linecap="butt"/><path d="M488.57 36.50L490.65 35.30" stroke-width="2.700" stroke-linecap="butt"/><circle cx="485.8" cy="38.1" r="3.100" stroke-width="2.500"/><circle cx="699.1" cy="140.5" r="6.300" stroke-width="1.300"/><circle cx="699.1" cy="140.5" r="3.500" stroke-width="1.300"/><circle cx="699.1" cy="140.5" r="1.300" fill="#fff" stroke="none"/><path d="M705.0 162.7v5.200l-3.100-2.600z" fill="#fff" stroke="none"/><path d="M707.0 161.5v7.600" stroke-width="1.200"/><path d="M676.0 46.0L677.6 36.5Q680.5 34.8 681.8 37.5L679.3 46.0Z" fill="#c62020" stroke="none"/><path d="M671.5 59.0L666.0 67.0Q665.6 71.5 670.0 72.4L669.6 75.3Q673.5 78.6 678.8 75.6L675.5 59.0Z" fill="#c2c2c2" stroke="none"/><path d="M669.8 72.2Q673.0 73.6 676.6 71.0" stroke="#9a9a9a" stroke-width=".8"/><path d="M680.0 53.7L699.0 49.6Q700.6 54.6 699.0 59.8Z" fill="#d6d6d6" stroke="none"/><path d="M667.5 53.3L648.4 47.0Q646.6 52.0 648.4 56.8Z" fill="#2f6fd8" stroke="none"/><rect x="668.1" y="46.2" width="11.600" height="13.400" rx="1" fill="#d2d2d2" stroke="none"/><path d="M668.1 49.2h11.600" stroke="#e6e6e6" stroke-width=".8"/><path d="M673.7 48.4L668.2 32.0L679.2 32.0Z" fill="#23a835" stroke="none"/><ellipse cx="673.6" cy="31.8" rx="5.600" ry="2.300" fill="#34c646" stroke="none"/><text x="673.5" y="22.3" font-size="9.500" font-weight="bold" fill="#ecece0" stroke="none" text-anchor="middle" dominant-baseline="central">y</text><text x="642.8" y="50.6" font-size="9.500" font-weight="bold" fill="#ecece0" stroke="none" text-anchor="middle" dominant-baseline="central">z</text><text x="678.4" y="30.0" font-size="5.500" font-weight="bold" fill="#ecece0" stroke="none" text-anchor="middle" dominant-baseline="central">x</text></svg><!--UIEND--></div>
  <!-- RIGHT -->
  <div class="panel" id="devlist" style="left:966px;top:48px;width:238px;height:117.3px;background:#343434">
    <div class="t" style="left:8.3px;top:3.7px">Device List</div>
    <div class="abs" style="left:4.5px;top:20.3px;width:228.6px;height:93.4px;background:#262626;border-radius:5px;overflow:hidden">
      <div class="abs" style="left:4px;top:3.4px;width:205px;height:16px;background:#454545;border-radius:3px"></div>
      <div class="abs" style="left:4px;top:22.5px;width:130px;height:16.3px;background:#393939;border-radius:3px 0 0 3px"></div>
      <div class="abs" style="left:134px;top:22.5px;width:75px;height:16.3px;background:#2b2b2b;border-radius:0 3px 3px 0"></div>
      <div class="abs" style="left:152.6px;top:22.5px;width:18.6px;height:16.3px;background:#343434"></div>
      <div class="abs" style="left:4px;top:41.6px;width:205px;height:16px;background:#454545;border-radius:3px"></div>
      <div class="abs" style="left:4px;top:60.6px;width:130px;height:16.3px;background:#393939;border-radius:3px 0 0 3px"></div>
      <div class="abs" style="left:134px;top:60.6px;width:75px;height:16.3px;background:#2b2b2b;border-radius:0 3px 3px 0"></div>
      <div class="abs" style="left:152.6px;top:60.6px;width:18.6px;height:16.3px;background:#343434"></div>
      <div class="abs" style="left:4px;top:79.5px;width:130px;height:16.3px;background:#393939;border-radius:3px 0 0 3px"></div>
      <div class="abs" style="left:134px;top:79.5px;width:75px;height:16.3px;background:#2b2b2b;border-radius:0 3px 3px 0"></div>
      <div class="abs" style="left:152.6px;top:79.5px;width:18.6px;height:16.3px;background:#343434"></div>
      <div class="t" style="left:8px;top:5.3px">Samplers</div>
      <div class="t" style="left:8px;top:24.5px">S1:</div>
      <div class="t" style="left:8px;top:43.5px">Emitters</div>
      <div class="t" style="left:8px;top:62.6px;width:125.5px;overflow:hidden">E1: Cym A 808 Tape Decay C 01.wav</div>
      <div class="t" style="left:8px;top:81.5px;width:125.5px;overflow:hidden">E2: OH 808 Tape Decay 02.wav</div>
      <div class="abs" style="left:214.8px;top:3.4px;width:8.4px;height:85.2px;background:#1b1b1b;border-radius:4px"></div>
      <div class="abs" style="left:216px;top:6.2px;width:6.2px;height:46.3px;background:#4a76cc;border-radius:3px"></div>
    </div>
    <svg style="left:0;top:0" width="238" height="117" viewBox="0 0 238 117">
      <defs><clipPath id="dlc"><rect x="0" y="0" width="238" height="113.7"/></clipPath></defs>
      <g clip-path="url(#dlc)">
      <path d="M194.3 32.1h10.700M194.3 70.2h10.700" stroke="#fff" stroke-width="1.7"/>
      <path d="M143.2 46.5L151.8 51.1L143.2 55.7Z" fill="#1e90ff"/><rect x="161.8" y="46.5" width="9.2" height="9.2" fill="#1e90ff"/><path d="M180.8 48.5h8.4v.1M183.6 46.8h2.8" stroke="#1e90ff" stroke-width="1.3" fill="none" stroke-linecap="round"/><path d="M181.6 49.6h6.8l-.6 6.3h-5.6z" fill="#1e90ff"/><g fill="none" stroke="#1e90ff" stroke-width="1.2" stroke-linecap="round"><path d="M199.3 48.5v-1.4a1 1 0 0 1 1-1h1.4M209.3 48.5v-1.4a1 1 0 0 0-1-1h-1.400M199.3 53.7v1.4a1 1 0 0 0 1 1h1.4M209.3 53.7v1.4a1 1 0 0 1-1 1h-1.400"/><path d="M200.1 51.1q4.2-5 8.4 0q-4.2 5-8.4 0z"/><circle cx="204.3" cy="51.1" r="1.1" fill="#1e90ff" stroke="none"/></g><path d="M143.2 84.5L151.8 89.1L143.2 93.7Z" fill="#1e90ff"/><rect x="161.8" y="84.5" width="9.2" height="9.2" fill="#1e90ff"/><path d="M180.8 86.5h8.4v.1M183.6 84.8h2.8" stroke="#1e90ff" stroke-width="1.3" fill="none" stroke-linecap="round"/><path d="M181.6 87.6h6.8l-.6 6.3h-5.6z" fill="#1e90ff"/><g fill="none" stroke="#1e90ff" stroke-width="1.2" stroke-linecap="round"><path d="M199.3 86.5v-1.4a1 1 0 0 1 1-1h1.4M209.3 86.5v-1.4a1 1 0 0 0-1-1h-1.400M199.3 91.7v1.4a1 1 0 0 0 1 1h1.4M209.3 91.7v1.4a1 1 0 0 1-1 1h-1.400"/><path d="M200.1 89.1q4.2-5 8.4 0q-4.2 5-8.4 0z"/><circle cx="204.3" cy="89.1" r="1.1" fill="#1e90ff" stroke="none"/></g><path d="M143.2 103.4L151.8 108.0L143.2 112.6Z" fill="#1e90ff"/><rect x="161.8" y="103.4" width="9.2" height="9.2" fill="#1e90ff"/><path d="M180.8 105.4h8.4v.1M183.6 103.7h2.8" stroke="#1e90ff" stroke-width="1.3" fill="none" stroke-linecap="round"/><path d="M181.6 106.5h6.8l-.6 6.3h-5.6z" fill="#1e90ff"/><g fill="none" stroke="#1e90ff" stroke-width="1.2" stroke-linecap="round"><path d="M199.3 105.4v-1.4a1 1 0 0 1 1-1h1.4M209.3 105.4v-1.4a1 1 0 0 0-1-1h-1.400M199.3 110.6v1.4a1 1 0 0 0 1 1h1.4M209.3 110.6v1.4a1 1 0 0 1-1 1h-1.400"/><path d="M200.1 108.0q4.2-5 8.4 0q-4.2 5-8.4 0z"/><circle cx="204.3" cy="108.0" r="1.1" fill="#1e90ff" stroke="none"/></g>
      </g>
      <g transform="translate(219.1 4.3) scale(.567)" fill="none" stroke="#fff" stroke-width="2.7" stroke-linecap="round" stroke-linejoin="round"><path d="M3 12a9 9 0 0 1 9-9 9.750 9.750 0 0 1 6.740 2.740L21 8"/><path d="M21 3v5h-5"/><path d="M21 12a9 9 0 0 1-9 9 9.750 9.750 0 0 1-6.740-2.740L3 16"/><path d="M8 16H3v5"/></g>
    </svg>
  </div>
  <div class="panel" id="editor" style="--d:1;left:966px;top:170.5px;width:238px;height:581.5px;background:#333;overflow:hidden">
    <div class="t" style="left:8.3px;top:3.2px">Editor</div>
    <div class="abs" style="left:0;top:20.0px;width:24.500px;height:570px;background:#1c1c1c"></div>
    <div class="abs" style="left:2px;top:95.5px;width:22.500px;height:24.500px;background:#3b3b3b;border-radius:4px 0 0 4px"></div>
    <div class="abs" style="left:33px;top:20.5px;width:197px;height:36px;background:#1b1b1b;border-radius:4px"></div>
    <div class="t or" style="left:37.2px;top:21.8px">Ticker:</div><div class="t" style="left:74.4px;top:21.8px">2</div>
    <div class="abs" style="left:33px;top:73.1px;width:179.8px;height:32.4px;background:#404040;border-radius:4px"></div>
    <div class="abs" style="left:36.6px;top:77.1px;width:31.4px;height:24.4px;background:#484848;border-radius:3px"></div>
    <div class="abs" style="left:71.9px;top:77.1px;width:31.4px;height:24.4px;background:#484848;border-radius:3px"></div>
    <div class="abs" style="left:107.3px;top:77.1px;width:31.4px;height:24.4px;background:#374049;border-radius:3px"></div>
    <div class="abs" style="left:142.6px;top:77.1px;width:31.4px;height:24.4px;background:#484848;border-radius:3px"></div>
    <div class="abs" style="left:178.0px;top:77.1px;width:31.4px;height:24.4px;background:#484848;border-radius:3px"></div>
    <div class="abs" style="left:33px;top:110.5px;width:179.8px;height:104.6px;background:#404040;border-radius:4px"></div>
    <div class="abs" style="left:98.6px;top:114.5px;width:110.8px;height:15.6px;background:#4b4b4b;border-radius:4px"></div>
    <div class="abs" style="left:98.6px;top:134.9px;width:110.8px;height:15.6px;background:#4b4b4b;border-radius:4px"></div>
    <div class="t" style="right:143.0px;top:115.8px">Pre Tick (s)</div>
    <div class="t" style="right:143.0px;top:136.2px">Tick (s)</div>
    <div class="t or" style="left:102.6px;top:115.8px">0</div>
    <div class="t or" style="left:102.6px;top:136.2px">2</div>
    <div class="abs" style="left:93.6px;top:155.9px;width:26px;height:15px;background:#1e90ff;border-radius:7.5px"></div><div class="abs" style="left:106.2px;top:157.2px;width:12.4px;height:12.4px;border-radius:50%;background:#f4f4f4"></div>
    <div class="abs" style="left:93.6px;top:176.5px;width:26px;height:15px;background:#0b0b0b;border-radius:7.5px"></div><div class="abs" style="left:94.8px;top:177.8px;width:12.4px;height:12.4px;border-radius:50%;background:#3a3a3a"></div>
    <div class="abs" style="left:93.6px;top:197.0px;width:26px;height:15px;background:#0b0b0b;border-radius:7.5px"></div><div class="abs" style="left:94.8px;top:198.3px;width:12.4px;height:12.4px;border-radius:50%;background:#3a3a3a"></div>
    <div class="t" style="left:123.0px;top:157.2px">Collision</div>
    <div class="t" style="left:123.0px;top:177.8px">Cyclic</div>
    <div class="t" style="left:123.0px;top:198.2px">Sequenced</div>
    <div class="abs" style="left:33px;top:219.5px;width:179.8px;height:246.6px;background:#404040;border-radius:4px"></div>
    <div class="t or" style="left:36.6px;top:221.6px">Connected To:</div>
    <div class="abs" style="left:36.6px;top:236.5px;width:172.8px;height:225px;background:#282828;border-radius:3px"></div>
    <div class="abs" style="left:33px;top:470.1px;width:179.8px;height:130px;background:#404040;border-radius:4px"></div>
    <div class="t" style="left:54.6px;top:475.8px">Position</div>
    <div class="t" style="right:142.6px;top:498.6px">X</div>
    <div class="abs" style="left:98.0px;top:496.7px;width:107px;height:16.4px;background:#4a4a4a;border:1px solid #6a6a6a;border-radius:3.5px"></div>
    <div class="abs" style="left:114.2px;top:496.7px;width:1px;height:16.4px;background:#6a6a6a"></div><div class="abs" style="left:188.8px;top:496.7px;width:1px;height:16.4px;background:#6a6a6a"></div>
    <div class="t" style="left:114.5px;width:74px;text-align:center;top:498.6px">2.7499</div>
    <div class="t" style="left:98.0px;width:16.500px;text-align:center;top:498.6px">-</div>
    <div class="t" style="left:189.0px;width:16.500px;text-align:center;top:498.6px">+</div>
    <div class="t" style="right:142.6px;top:519.1px">Y</div>
    <div class="abs" style="left:98.0px;top:517.2px;width:107px;height:16.4px;background:#4a4a4a;border:1px solid #6a6a6a;border-radius:3.5px"></div>
    <div class="abs" style="left:114.2px;top:517.2px;width:1px;height:16.4px;background:#6a6a6a"></div><div class="abs" style="left:188.8px;top:517.2px;width:1px;height:16.4px;background:#6a6a6a"></div>
    <div class="t" style="left:114.5px;width:74px;text-align:center;top:519.1px">4.2788</div>
    <div class="t" style="left:98.0px;width:16.500px;text-align:center;top:519.1px">-</div>
    <div class="t" style="left:189.0px;width:16.500px;text-align:center;top:519.1px">+</div>
    <div class="t" style="right:142.6px;top:539.6px">Z</div>
    <div class="abs" style="left:98.0px;top:537.7px;width:107px;height:16.4px;background:#4a4a4a;border:1px solid #6a6a6a;border-radius:3.5px"></div>
    <div class="abs" style="left:114.2px;top:537.7px;width:1px;height:16.4px;background:#6a6a6a"></div><div class="abs" style="left:188.8px;top:537.7px;width:1px;height:16.4px;background:#6a6a6a"></div>
    <div class="t" style="left:114.5px;width:74px;text-align:center;top:539.6px">14.5007</div>
    <div class="t" style="left:98.0px;width:16.500px;text-align:center;top:539.6px">-</div>
    <div class="t" style="left:189.0px;width:16.500px;text-align:center;top:539.6px">+</div>
    <svg style="left:0;top:0" width="238" height="581" viewBox="0 0 238 581" fill="none" stroke="#f0f0f0" stroke-width="1.25" stroke-linecap="round" stroke-linejoin="round"><circle cx="12.4" cy="32.4" r="6.1"/><path d="M12.4 31.8v3.700" stroke-width="1.4"/><circle cx="12.4" cy="29.4" r=".85" fill="#f0f0f0" stroke="none"/><path d="M6.7 53.7h2.400l3.400-3v10l-3.400-3h-2.400z"/><path d="M14.3 53.3a3 3 0 0 1 0 4.800" stroke-width="1.6"/><path d="M16.1 50.5a6.200 6.200 0 0 1 0 10.400"/><circle cx="11.6" cy="76.4" r="1.25" fill="#f0f0f0" stroke="none"/><circle cx="18.0" cy="76.4" r="1.25" fill="#f0f0f0" stroke="none"/><circle cx="8.4" cy="79.5" r="1.25" fill="#f0f0f0" stroke="none"/><circle cx="14.8" cy="79.5" r="1.25" fill="#f0f0f0" stroke="none"/><circle cx="11.6" cy="82.8" r="1.25" fill="#f0f0f0" stroke="none"/><circle cx="18.0" cy="82.8" r="1.25" fill="#f0f0f0" stroke="none"/><circle cx="8.4" cy="86.0" r="1.25" fill="#f0f0f0" stroke="none"/><circle cx="14.8" cy="86.0" r="1.25" fill="#f0f0f0" stroke="none"/><g stroke="#1e90ff" stroke-width="1.2"><circle cx="11.6" cy="107.1" r="1.9"/><path d="M11.6 105.2L11.6 101.8"/><circle cx="11.6" cy="100.2" r="1.55"/><path d="M13.4 106.5L16.6 105.5"/><circle cx="18.2" cy="105.0" r="1.55"/><path d="M12.7 108.6L14.7 111.4"/><circle cx="15.7" cy="112.7" r="1.55"/><path d="M10.5 108.6L8.5 111.4"/><circle cx="7.5" cy="112.7" r="1.55"/><path d="M9.8 106.5L6.6 105.5"/><circle cx="5.0" cy="105.0" r="1.55"/></g><circle cx="13.3" cy="132.1" r="6.1"/><g stroke="#8a8a8a" stroke-width=".9"><path d="M11.3 127.5v9.200M15.3 127.5v9.200M8.7 130.1h9.200M8.7 134.1h9.200"/></g><circle cx="7.4" cy="152.7" r="1.5"/><path d="M8.9 152.7h4.800a2.400 2.400 0 0 1 0 4.850h-2.600a2.400 2.400 0 0 0 0 4.850h6"/><circle cx="18.7" cy="162.4" r="1.9" fill="#f0f0f0" stroke="none"/><rect x="10.7" y="181.6" width="5.200" height="7.800" rx="1"/><path d="M8.1 182.2a5.500 5.500 0 0 1 3.600-4.200M18.5 182.2a5.500 5.500 0 0 0-3.600-4.200M5.5 181.8a8 8 0 0 1 5.200-6.200M21.1 181.8a8 8 0 0 0-5.200-6.200"/><rect x="7.5" y="202.8" width="11.800" height="11.200" rx="1.2" stroke-width="1.3"/><g fill="#f0f0f0" stroke="none"><rect x="10.1" y="205.2" width="2.400" height="2.400"/><rect x="14.3" y="205.2" width="2.400" height="2.400"/><rect x="10.1" y="209.2" width="2.400" height="2.400"/><rect x="14.3" y="209.2" width="2.400" height="2.400"/></g><path d="M50.2 86.1L56.0 89.5L50.2 92.9Z"/><circle cx="87.8" cy="89.5" r="5.900"/><rect x="85.4" y="87.1" width="4.800" height="4.800" rx=".8" fill="#f0f0f0" stroke="none"/><path d="M121.8 92.5h-1.800a3 3 0 0 1 0-6h1M123.8 86.5h1.800a3 3 0 0 1 0 6h-1M121.4 89.5h2.800" stroke-width="1.3"/><path d="M117.2 84.1L128.6 94.9" stroke-width="1.1"/><rect x="155.8" y="86.7" width="8.800" height="8.800" rx="1.2" stroke-width="1.3"/><path d="M152.4 92.5v-8.200a1 1 0 0 1 1-1h8.200" stroke-dasharray="1.8 1.700" stroke-width="1.2"/><path d="M188.0 89.5l3.800-4.200h7.400a1 1 0 0 1 1 1v6.400a1 1 0 0 1-1 1h-7.400z" stroke-width="1.3"/><path d="M193.6 87.8l3.400 3.400M197.0 87.8l-3.400 3.400" stroke-width="1.2"/><path d="M41.4 477.8l4.800 4.500l-4.800 4.500" stroke-width="1.3"/></svg>
    </div>
</div>
</body>
</html>
